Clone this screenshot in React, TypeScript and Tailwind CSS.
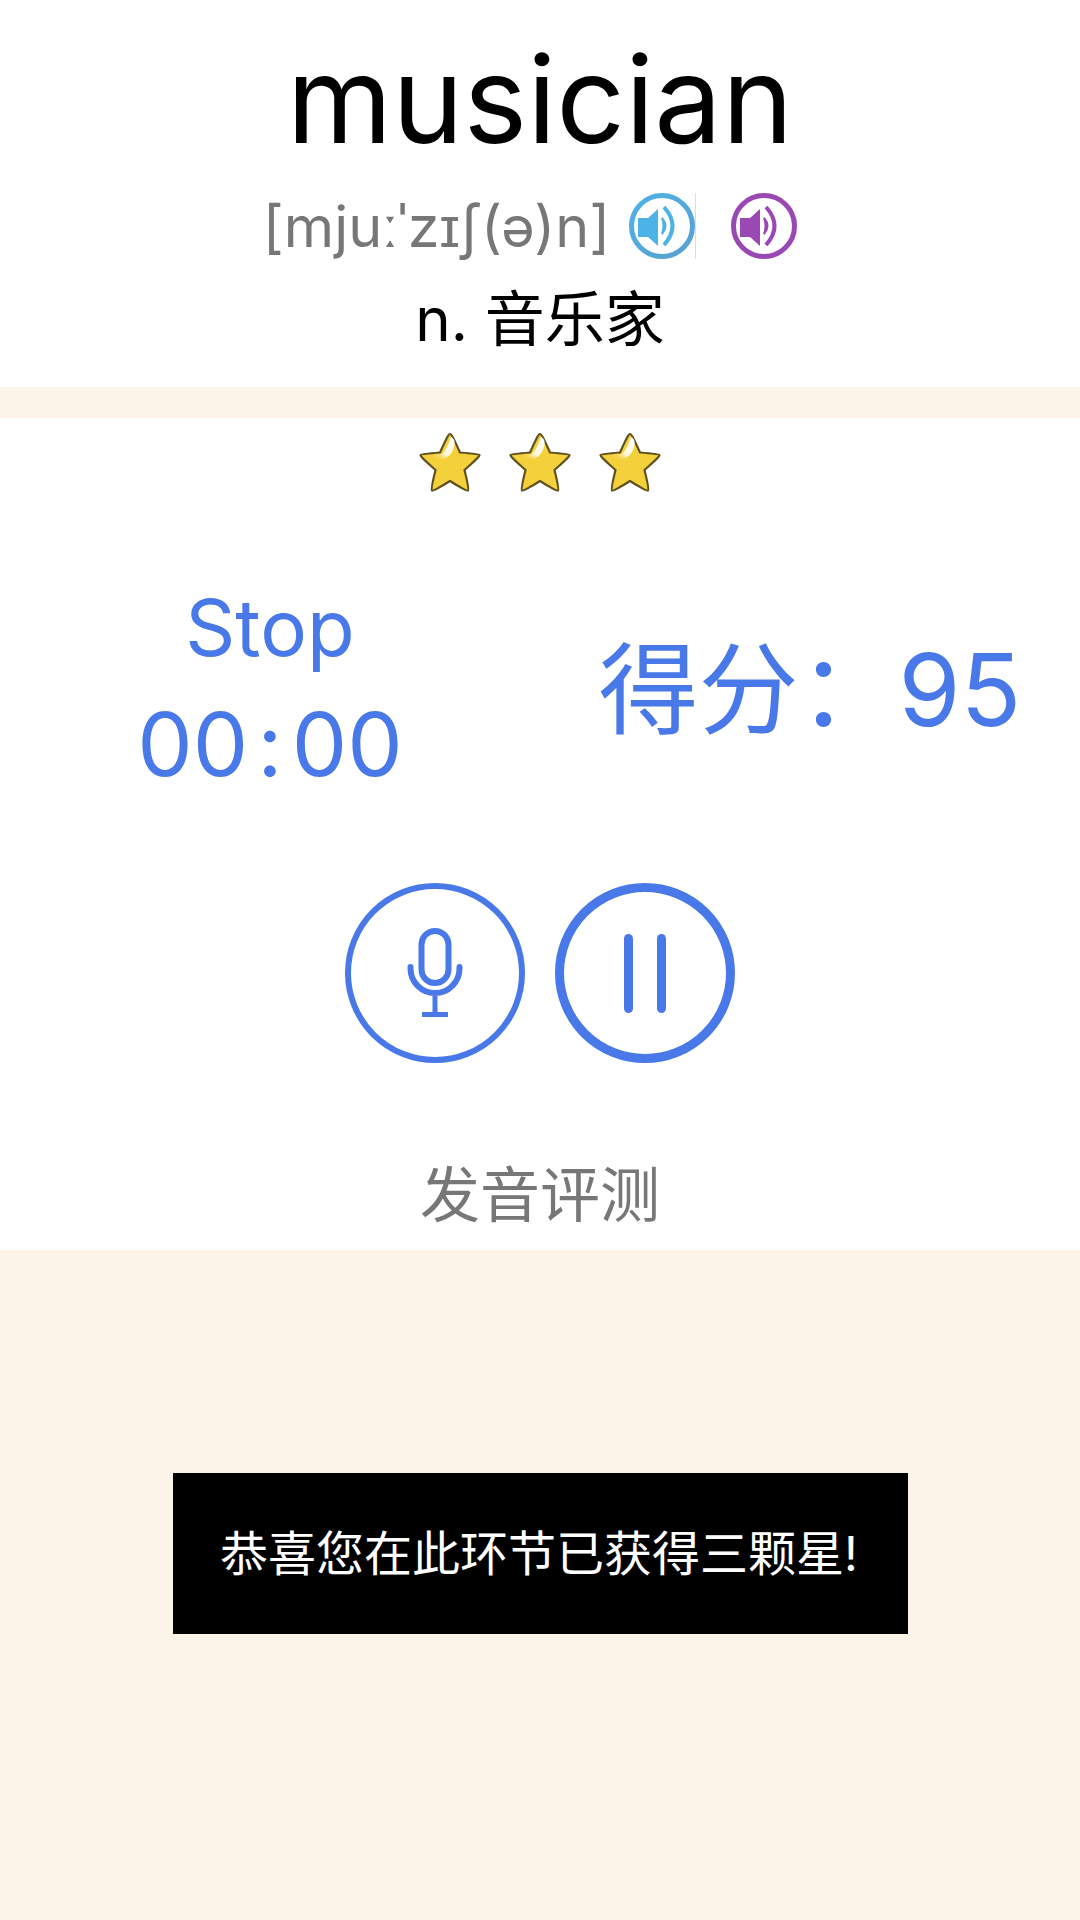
const FONT = "font-['Inter','Noto_Sans_CJK_SC',sans-serif]"

function Speaker({ color, fill, id }: { color: string; fill?: string; id: string }) {
  return (
    <svg viewBox="0 0 66 66" className="h-[66px] w-[66px] shrink-0">
      <defs>
        <linearGradient id={id} x1="0" y1="0" x2="1" y2="1">
          <stop offset="0" stopColor={color} />
          <stop offset="1" stopColor={fill ?? color} />
        </linearGradient>
      </defs>
      <circle cx="33" cy="33" r="30.500" fill="none" stroke={`url(#${id})`} strokeWidth="5" />
      <path d="M9 25h10l10-9v37l-10-9H9z" fill={color} />
      <path d="M33 25q7 8 0 16q3-8 0-16z" fill={color} stroke={color} strokeWidth="2" />
      <path d="M35 14q17 19 0 38" fill="none" stroke={color} strokeWidth="4" />
    </svg>
  )
}

function Star({ id }: { id: string }) {
  return (
    <svg viewBox="0 0 62 60" className="h-[60px] w-[62px]">
      <defs>
        <linearGradient id={id} x1="0.800" y1="0.100" x2="0.200" y2="0.900">
          <stop offset="0" stopColor="#fff" />
          <stop offset="0.600" stopColor="#fff" stopOpacity="0.800" />
          <stop offset="1" stopColor="#f5d23f" stopOpacity="0" />
        </linearGradient>
      </defs>
      <path
        d="M31 2c1.500 0 3 3 10 18.500 13 1 19 1.500 19.500 2.500.5 1.500-5 6-15 15 3.500 14 4.500 19.500 3.500 20.500-1 .8-6-2-18-9.500-12 7.500-17 10.300-18 9.500-1-1 0-6.500 3.500-20.500C6.500 29 1 24.500 1.500 23 2 22 8 21.500 21 20.500 28 5 29.500 2 31 2z"
        fill="#f4d03a"
        stroke="#5f5020"
        strokeWidth="2.200"
        strokeLinejoin="round"
      />
      <path d="M32 5c5 2 4 8 2 13-3 7-10 11-18 10-3-1-6-2-8-4 5-1 11-1 15-2 5-5 7-12 9-17z" fill={`url(#${id})`} />
    </svg>
  )
}

function MicButton() {
  return (
    <div className="flex h-[180px] w-[180px] items-center justify-center rounded-full border-[6px] border-[#4979e8]">
      <svg viewBox="0 0 60 90" className="h-[90px] w-[60px]" fill="none" stroke="#4979e8" strokeWidth="6" strokeLinecap="round">
        <rect x="16.500" y="3" width="27" height="52" rx="13.500" />
        <path d="M5.500 39v1.500a24.500 24.500 0 0 0 49 0v-1.500" />
        <path d="M30 68v17" strokeWidth="5" strokeLinecap="butt" />
        <path d="M17 86.500h26" strokeWidth="5" strokeLinecap="butt" />
      </svg>
    </div>
  )
}

function PauseButton() {
  return (
    <div className="flex h-[180px] w-[180px] items-center justify-center gap-[24px] rounded-full border-[9px] border-[#4979e8]">
      <div className="h-[79px] w-[9px] rounded-full bg-[#4979e8]" />
      <div className="h-[79px] w-[9px] rounded-full bg-[#4979e8]" />
    </div>
  )
}

export default function App() {
  return (
    <div className={`${FONT} flex min-h-[1920px] w-[1080px] flex-col bg-[#fcf4e9]`}>
      <header className="flex h-[387px] flex-col items-center bg-white">
        <h1 className="mt-[29px] text-[120.500px] leading-[140px] font-normal text-black">musician</h1>
        <div className="mt-[22px] flex h-[70px] items-center pr-[20px]">
          <span className="text-[57.500px] leading-[70px] text-[#777]">[mjuːˈzɪʃ(ə)n]</span>
          <div className="ml-[19px] flex items-center">
            <Speaker id="s1" color="#4db2e6" fill="#5a9fd0" />
            <div className="h-[66px] w-px bg-[#ddd]" />
            <div className="ml-[35px]">
              <Speaker id="s2" color="#9a48b4" />
            </div>
          </div>
        </div>
        <p className="mt-[23px] text-[60px] leading-[70px] text-black">n. 音乐家</p>
      </header>

      <main className="mt-[31px] flex h-[832px] flex-col items-center bg-white">
        <div className="mt-[14px] flex gap-[28px]">
          <Star id="a" />
          <Star id="b" />
          <Star id="c" />
        </div>

        <div className="mt-[91px] flex w-full text-[#4979e8]">
          <div className="flex w-[540px] flex-col items-center">
            <span className="text-[78px] leading-[90px]">Stop</span>
            <span className="mt-[21px] text-[88px] leading-[100px]">
              00<span className="mx-[9px]">:</span>00
            </span>
          </div>
          <div className="mt-[47px] flex w-[540px] justify-center">
            <span className="text-[100px] leading-[120px]">得分：95</span>
          </div>
        </div>

        <div className="mt-[89px] flex gap-[30px]">
          <MicButton />
          <PauseButton />
        </div>

        <p className="mt-[97px] text-[60px] leading-[70px] text-[#777]">发音评测</p>
      </main>

      <div className="flex flex-1 items-start justify-center">
        <div className="mt-[223px] flex h-[161px] w-[735px] items-center justify-center bg-black pr-[2px] text-[48px] text-white">
          恭喜您在此环节已获得三颗星!
        </div>
      </div>
    </div>
  )
}
